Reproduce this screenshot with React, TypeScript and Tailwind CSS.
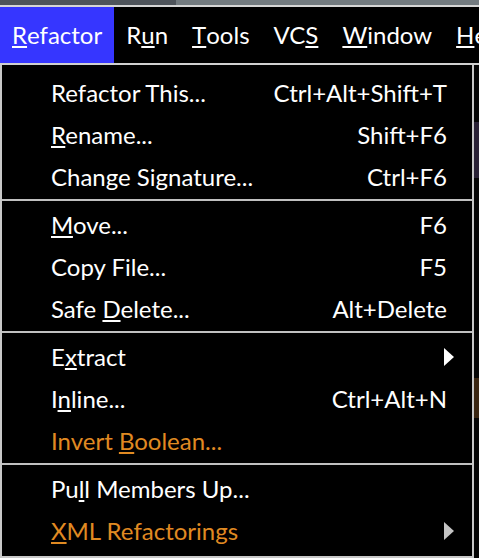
import type { ReactNode } from "react";

type Item = {
	label: ReactNode;
	shortcut?: string;
	submenu?: boolean;
	accent?: boolean;
	arrowColor?: string;
};

const U = ({ children }: { children: ReactNode }) => (
	<span className="underline decoration-2 underline-offset-2">{children}</span>
);

const groups: Item[][] = [
	[
		{ label: "Refactor This...", shortcut: "Ctrl+Alt+Shift+T" },
		{ label: <><U>R</U>ename...</>, shortcut: "Shift+F6" },
		{ label: <>Change Si<U>g</U>nature...</>, shortcut: "Ctrl+F6" },
	],
	[
		{ label: <><U>M</U>ove...</>, shortcut: "F6" },
		{ label: "Copy File...", shortcut: "F5" },
		{ label: <>Safe <U>D</U>elete...</>, shortcut: "Alt+Delete" },
	],
	[
		{ label: <>E<U>x</U>tract</>, submenu: true, arrowColor: "#ffffff" },
		{ label: <>I<U>n</U>line...</>, shortcut: "Ctrl+Alt+N" },
		{ label: <>Invert <U>B</U>oolean...</>, accent: true },
	],
	[
		{ label: <>Pu<U>l</U>l Members Up...</> },
		{ label: <><U>X</U>ML Refactorings</>, submenu: true, accent: true, arrowColor: "#c4c4c4" },
	],
];

const menuBar = [
	{ pre: "", u: "R", post: "efactor", active: true },
	{ pre: "R", u: "u", post: "n" },
	{ pre: "", u: "T", post: "ools" },
	{ pre: "VC", u: "S", post: "" },
	{ pre: "", u: "W", post: "indow" },
	{ pre: "", u: "H", post: "elp" },
];

function Arrow({ color }: { color: string }) {
	return (
		<svg width="10" height="18" viewBox="0 0 10 18" className="-mr-[7px]">
			<path d="M0 0 L10 9 L0 18 Z" fill={color} />
		</svg>
	);
}

function MenuRow({ item }: { item: Item }) {
	return (
		<div
			className={`h-[42px] flex items-center justify-between pl-[49px] pr-[25px] ${
				item.accent ? "text-[#e08a22]" : "text-white"
			}`}
		>
			<span className="whitespace-nowrap">{item.label}</span>
			{item.shortcut && <span className="whitespace-nowrap">{item.shortcut}</span>}
			{item.submenu && <Arrow color={item.arrowColor ?? "#fff"} />}
		</div>
	);
}

function App() {
	return (
		<div
			className="w-[479px] h-[558px] overflow-hidden bg-black text-[24px] leading-none"
			style={{ fontFamily: "Lato, 'Noto Sans', sans-serif" }}
		>
			{/* window strip above the menubar */}
			<div className="flex h-[5px]">
				<div className="w-[176px] bg-[#4e545b]" />
				<div className="flex-1 bg-[#737b80]" />
			</div>
			<div className="h-[2px] bg-[#d6d6d6]" />

			{/* menu bar */}
			<div className="flex h-[56px] items-stretch whitespace-nowrap">
				{menuBar.map((m, i) => (
					<div
						key={i}
						className={`flex items-center px-[12px] text-white ${m.active ? "bg-[#3636ff]" : ""}`}
					>
						{m.pre}
						<U>{m.u}</U>
						{m.post}
					</div>
				))}
			</div>
			<div className="h-[2px] bg-[#d0d0d0]" />

			<div className="flex">
				{/* dropdown */}
				<div className="w-[474px] border-x-2 border-b-2 border-[#c8c8c8] pt-[7px] pb-[4px]">
					{groups.map((g, gi) => (
						<div key={gi}>
							{gi > 0 && (
								<div className="pt-[1px] pb-[3px]">
									<div className="h-[2px] bg-[#c0c0c0]" />
								</div>
							)}
							{g.map((item, ii) => (
								<MenuRow key={ii} item={item} />
							))}
						</div>
					))}
				</div>

				{/* sliver of the editor behind */}
				<div className="flex-1 flex flex-col">
					<div className="h-[57px] bg-[#050505]" />
					<div className="h-[56px] bg-[#2a2236]" />
					<div className="h-[200px] bg-[#050505]" />
					<div className="h-[40px] bg-[#3a2612]" />
					<div className="flex-1 bg-[#050505]" />
				</div>
			</div>
		</div>
	);
}

export default App;
